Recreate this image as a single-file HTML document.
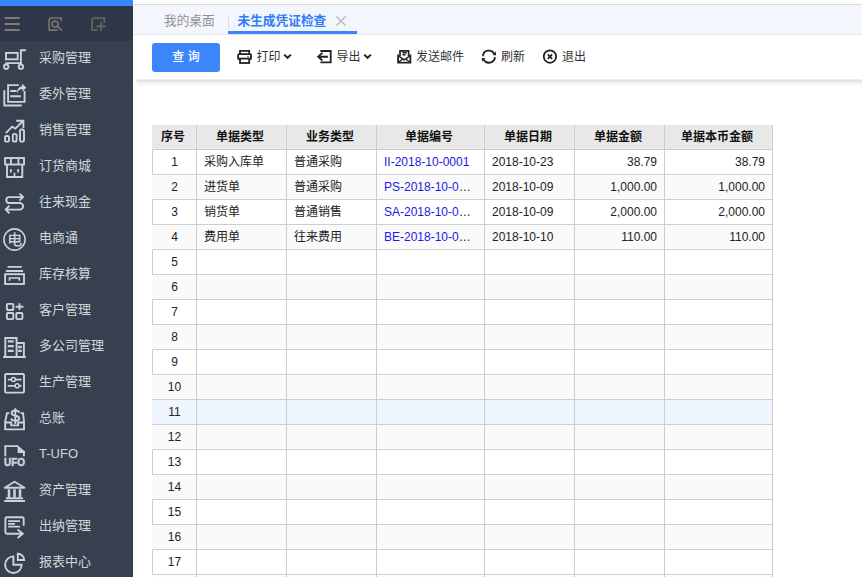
<!DOCTYPE html>
<html lang="zh-CN">
<head>
<meta charset="utf-8">
<title>未生成凭证检查</title>
<style>
*{box-sizing:border-box;margin:0;padding:0}
html,body{width:862px;height:577px;overflow:hidden;background:#fff}
body{font-family:"Liberation Sans","Noto Sans CJK SC",sans-serif;font-size:12px;color:#222;position:relative}
#side{position:absolute;left:0;top:0;width:133px;height:577px;background:#36404e}
#side .blue{position:absolute;left:0;top:0;width:133px;height:6px;background:#3686ff}
#side .hd{position:absolute;left:0;top:6px;width:133px;height:35px;background:#2e3849}
#side .hd svg{position:absolute;top:0;left:0}
#menu{position:absolute;left:0;top:40px;width:133px;list-style:none}
#menu li{height:36px;position:relative;color:#d3d6db;font-size:13px;line-height:36px;padding-left:39px;white-space:nowrap}
#menu li svg{position:absolute;left:0;top:0;width:36px;height:36px;fill:none;stroke:#cdd1d8;stroke-width:1.9}
#menu li svg .f{fill:#cdd1d8;stroke:none}
#main{position:absolute;left:133px;top:0;width:729px;height:577px;background:#fff;overflow:hidden}
#tabs{position:absolute;left:0;top:4px;width:729px;height:31px;background:#f3f6fd;border-top:1px solid #dcdbd9;border-bottom:1px solid #e4e7ee}
#tabs .t1{position:absolute;left:31px;top:0;height:29px;line-height:32px;font-size:12.700px;color:#939393}
#tabs .sep{position:absolute;left:95px;top:10px;width:1px;height:14px;background:#dcdfe6}
#tabs .t2{position:absolute;left:95px;top:0;width:129px;height:29px;line-height:32px;font-size:12.700px;font-weight:700;color:#2f7cf6;padding-left:9.500px;border-bottom:3px solid #3a85fb}
#tabs .x{position:absolute;left:202.400px;top:10.100px;width:12px;height:12px}
#bar{position:absolute;left:0;top:35px;width:729px;height:45px;background:#fff}
#shadow::before{content:"";position:absolute;left:0;top:0;width:4px;height:9px;background:linear-gradient(to right,#fff,rgba(255,255,255,0))}
#shadow{position:absolute;left:1px;top:79px;width:730px;height:9px;background:linear-gradient(to bottom,#eeeeee 0,#ececec 0.500px,#e0e0e0 1.500px,#e7e7e7 2.500px,#efefef 3.500px,#f5f5f5 4.500px,#f9f9f9 5.500px,#fcfcfc 6.500px,#fefefe 7.500px,#fff 9px)}
#bar .btn{position:absolute;left:19px;top:8px;width:68px;height:29px;border-radius:3px;background:#3b86fb;color:#fff;font-size:12px;font-weight:500;line-height:29px;text-align:center;word-spacing:0}
#bar .it{position:absolute;top:0;height:45px;line-height:44px;font-size:12px;color:#333;white-space:nowrap}
#bar svg{position:absolute}
table{position:absolute;left:19px;top:125px;border-collapse:separate;border-spacing:0;table-layout:fixed;width:621px}
th{height:25px;background:#e8e8e8;font-weight:bold;font-size:12px;color:#111;border-right:1px solid #ccc;border-bottom:1px solid #ccc;text-align:center;padding:0 3px 0 0;box-shadow:inset -1px -1px 0 #ececec;line-height:24px;vertical-align:top}
th:first-child{border-left:1px solid #e8e8e8}
td{height:25px;background:#fff;border-right:1px solid #ccc;border-bottom:1px solid #ccc;font-size:12px;color:#222;padding:0 7px;white-space:nowrap;overflow:hidden;text-overflow:ellipsis;line-height:24px;vertical-align:top}
td:first-child{border-left:1px solid #ccc}
td.n{text-align:center;padding:0}
td.r{text-align:right}
tr.e td{background:#fafafa;box-shadow:inset 0 1px 0 #fff,inset 0 -1px 0 #fff}
tr.e td:first-child{border-left-color:#fafafa}
tr.h td{background:#eef5ff}
tr.h td:first-child{border-left-color:#eef5ff}
td a{color:#1a1ae0;text-decoration:none}
</style>
</head>
<body>
<div id="side">
  <div class="blue"></div>
  <div class="hd">
    <svg width="133" height="35" viewBox="0 0 133 35" fill="none" stroke="#807b77" stroke-width="1.8">
      <path d="M4.600 12h15.200M4.600 18h15.200M4.600 24h15.200"/>
      <g stroke="#787470" stroke-width="1.700"><path d="M49.200 24.200V13.300L50.500 12H61.200V15.200M48.400 24.200H57.600"/><circle cx="55.100" cy="18.050" r="3"/><path d="M57.400 20.400L62 24.600"/></g>
      <g stroke="#686562" stroke-width="1.700"><path d="M92.050 25V13.300L93.300 12H104.300V17M91.200 24.200H97.500M96.200 20.400H105.800M101 15.700V25.100"/></g>
    </svg>
  </div>
  <ul id="menu">
    <li><svg viewBox="0 0 36 36"><rect x="6" y="12.900" width="11.700" height="6.400"/><path d="M25.900 10.300H20.900V23.100H5.300"/><circle cx="6.200" cy="26.700" r="2.200"/><circle cx="20.900" cy="26.700" r="2.200"/></svg>采购管理</li>
    <li><svg viewBox="0 0 36 36"><path d="M4.300 14.300V29.500H21.800M18.700 9.100H8.100V25.900H24.600V15M10.300 15H16.500M10.300 20.300H20.900"/><path class="f" d="M16.800 17.200C17 13 19.300 10.600 22 10.300L21.800 7.600L26.300 11.600L22.600 15.800L22.400 13.100C20.200 13.200 18.400 14.400 16.800 17.200Z"/></svg>委外管理</li>
    <li><svg viewBox="0 0 36 36"><rect x="5" y="24" width="4" height="5.600" rx="1.600"/><rect x="12.800" y="21.900" width="3.800" height="7.700" rx="1.600"/><rect x="20" y="17.500" width="4" height="12.100" rx="1.600"/><path d="M5.800 21.200L12.200 14.700L15.300 16.600L22.800 9.300M16.200 8.800H23.400V15.900"/></svg>销售管理</li>
    <li><svg viewBox="0 0 36 36"><rect x="5.100" y="10" width="18.900" height="6.500"/><path d="M10.900 10V16.500M18.400 10V16.500M7 16.500V29H22.300V16.500"/><path d="M10.900 20.900V24.600M18.100 20.900V24.600M14.500 24.800V28" stroke-width="1.700"/></svg>订货商城</li>
    <li><svg viewBox="0 0 36 36"><path d="M19.500 9.600L23.100 13.100L19.500 16.700M22.800 13.100H9.200A2.950 2.950 0 0 0 9.200 19H19.800A3.300 3.300 0 0 1 19.800 25.600H6M9.500 21.700L5.700 25.600L9.500 29.400"/></svg>往来现金</li>
    <li><svg viewBox="0 0 36 36"><circle cx="14.500" cy="19.500" r="10.600" stroke-width="1.600"/><text class="f" x="14.650" y="25" font-size="15" text-anchor="middle" font-weight="500" font-family="'Liberation Sans','Noto Sans CJK SC',sans-serif">电</text></svg>电商通</li>
    <li><svg viewBox="0 0 36 36"><path d="M7.500 10.900H21.800M5.900 15H23.100"/><rect x="5.100" y="18.200" width="18.900" height="9.800"/><path d="M9.500 24.800V22H19.300V24.800" stroke-width="1.700"/></svg>库存核算</li>
    <li><svg viewBox="0 0 36 36"><rect x="6.900" y="11.900" width="6.400" height="6.100" rx="0.800"/><rect x="6.900" y="21" width="6.400" height="6.100" rx="0.800"/><rect x="16.300" y="21" width="6.100" height="6.100" rx="0.800"/><path d="M15.600 14.700H23.400M19.500 11.200V18.100"/></svg>客户管理</li>
    <li><svg viewBox="0 0 36 36"><path d="M3.100 29H25.900M5.300 29V10H16.600V29M16.600 15H23.900V29"/><path d="M7.800 13.400H13.700M7.800 18.100H13.700M7.800 22.800H13.700M18.100 19H21.800M18.100 22.800H21.800" stroke-width="2.300"/></svg>多公司管理</li>
    <li><svg viewBox="0 0 36 36"><rect x="5.100" y="10" width="18.900" height="18.600" rx="1"/><path d="M7.800 15.600H21.500M7.800 21.800H21.500" stroke-width="1.700"/><circle cx="13.400" cy="15.500" r="2" fill="#36404e" stroke-width="1.600"/><circle cx="17.200" cy="21.800" r="2" fill="#36404e" stroke-width="1.600"/></svg>生产管理</li>
    <li><svg viewBox="0 0 36 36"><path d="M9.200 13.100H7L5.200 21.500V29.400H24V21.500L23 13.100H20.600M5.200 22.500H11.200V25.400H18.100V22.500H24"/><path d="M19.300 12.700C18.500 9.800 11.600 9.600 11.600 13.200C11.600 16.600 19.300 14.900 19.300 18.300C19.300 21.700 12 21.500 11 18.500M15.300 8.200V24" stroke-width="1.900"/></svg>总账</li>
    <li><svg viewBox="0 0 36 36"><path d="M5.300 20.300V10.100H18M23.900 15V20.300"/><path class="f" d="M17.600 9.200L25 15.400V17H17.600Z"/><text class="f" style="stroke:#cdd1d8;stroke-width:.5" x="14.550" y="29.500" font-size="10" text-anchor="middle" font-weight="bold" textLength="21" lengthAdjust="spacingAndGlyphs" font-family="'Liberation Sans',sans-serif">UFO</text></svg>T-UFO</li>
    <li><svg viewBox="0 0 36 36"><path d="M4.700 15.700L14.500 9.700L24.500 15.700ZM5.900 26.200H23.100M4.100 29H25" stroke-linejoin="round"/><path d="M9 17.200V25.600M14.500 17.200V25.600M20 17.200V25.600" stroke-width="2.600"/></svg>资产管理</li>
    <li><svg viewBox="0 0 36 36"><path d="M23.700 17.800V10.700Q23.700 9.200 22.200 9.200H6.900Q5.400 9.200 5.400 10.700V24.200Q5.400 25.700 6.900 25.700H22.600M17.600 21.500L22.800 25.700L17.600 30.100"/><path d="M8.100 13.100H20M8.100 15.900H15M8.100 18.700H20" stroke-width="1.700"/></svg>出纳管理</li>
    <li><svg viewBox="0 0 36 36"><path d="M13.400 12.400A8.300 8.300 0 1 0 21.700 20.700H13.400ZM17.800 9.800V16H24.200A6.300 6.300 0 0 0 17.800 9.800Z"/></svg>报表中心</li>
  </ul>
</div>
<div id="main">
  <div id="tabs">
    <div class="t1">我的桌面</div>
    <div class="sep"></div>
    <div class="t2">未生成凭证检查</div>
    <svg class="x" viewBox="0 0 12 12" stroke="#b9b9b9" stroke-width="1.400" fill="none"><path d="M1.500 1.500l9 9M10.500 1.500l-9 9"/></svg>
  </div>
  <div id="bar">
    <div class="btn">查 询</div>
    <svg style="left:104px;top:14px" width="16" height="16" viewBox="0 0 16 16" fill="none" stroke="#222" stroke-width="1.800"><path d="M3 5V1.800H12.200V5"/><rect x="1.100" y="5.200" width="12.900" height="5" rx="1"/><rect x="3" y="9.600" width="9.200" height="4.400" fill="#fff"/><circle cx="11" cy="7.500" r="0.700" fill="#222" stroke="none"/></svg>
    <div class="it" style="left:123.500px">打印</div>
    <svg style="left:150px;top:18px" width="10" height="8" viewBox="0 0 10 8" fill="none" stroke="#222" stroke-width="2"><path d="M1.300 1.600l3.300 3.300 3.300-3.300"/></svg>
    <svg style="left:184px;top:14px" width="16" height="16" viewBox="0 0 16 16" fill="none" stroke="#222" stroke-width="1.800"><path d="M3.400 2H13.700V13.300H3.400M1.300 7.750H10.900M5.400 3.900L1 7.750L5.400 11.500"/></svg>
    <div class="it" style="left:203.500px">导出</div>
    <svg style="left:230px;top:18px" width="10" height="8" viewBox="0 0 10 8" fill="none" stroke="#222" stroke-width="2"><path d="M1.300 1.600l3.300 3.300 3.300-3.300"/></svg>
    <svg style="left:264px;top:14px" width="16" height="16" viewBox="0 0 16 16" fill="none" stroke="#222" stroke-width="1.800"><path d="M3 7V1.800H11.600V7" stroke-width="1.700"/><path d="M1.100 5.600V13.600H13.400V5.600"/><path d="M1.500 6.900L7.200 10.900L13 6.900M1.600 13.200L5.400 10.200M12.900 13.200L9.100 10.200" stroke-width="1.400"/><path d="M5.400 3.700H9.800M5.400 5.700H8.600" stroke-width="1.400"/></svg>
    <div class="it" style="left:283px">发送邮件</div>
    <svg style="left:348px;top:14px" width="16" height="16" viewBox="0 0 16 16" fill="none" stroke="#222" stroke-width="1.800"><path d="M1.900 7.200A6.100 6.100 0 0 1 13.300 4.700M14 8.200A6.100 6.100 0 0 1 2.600 10.600"/><path d="M15 2.600V6.300H11.500ZM0.900 12.800V9H4.400Z" fill="#222" stroke="none"/></svg>
    <div class="it" style="left:368px">刷新</div>
    <svg style="left:409px;top:14px" width="16" height="16" viewBox="0 0 16 16" fill="none" stroke="#222" stroke-width="1.800"><circle cx="7.950" cy="7.600" r="6.200"/><path d="M5.800 5.400L10.100 9.800M10.100 5.400L5.800 9.800" stroke-width="1.700"/></svg>
    <div class="it" style="left:429px">退出</div>
  </div>
  <div id="shadow"></div>
  <table>
    <colgroup><col style="width:45px"><col style="width:90px"><col style="width:90px"><col style="width:108px"><col style="width:90px"><col style="width:90px"><col style="width:108px"></colgroup>
    <tr><th>序号</th><th>单据类型</th><th>业务类型</th><th>单据编号</th><th>单据日期</th><th>单据金额</th><th>单据本币金额</th></tr>
    <tr><td class="n">1</td><td>采购入库单</td><td>普通采购</td><td><a>II-2018-10-0001</a></td><td>2018-10-23</td><td class="r">38.79</td><td class="r">38.79</td></tr>
    <tr class="e"><td class="n">2</td><td>进货单</td><td>普通采购</td><td><a>PS-2018-10-0001</a></td><td>2018-10-09</td><td class="r">1,000.00</td><td class="r">1,000.00</td></tr>
    <tr><td class="n">3</td><td>销货单</td><td>普通销售</td><td><a>SA-2018-10-0001</a></td><td>2018-10-09</td><td class="r">2,000.00</td><td class="r">2,000.00</td></tr>
    <tr class="e"><td class="n">4</td><td>费用单</td><td>往来费用</td><td><a>BE-2018-10-0001</a></td><td>2018-10-10</td><td class="r">110.00</td><td class="r">110.00</td></tr>
    <tr><td class="n">5</td><td></td><td></td><td></td><td></td><td></td><td></td></tr>
    <tr class="e"><td class="n">6</td><td></td><td></td><td></td><td></td><td></td><td></td></tr>
    <tr><td class="n">7</td><td></td><td></td><td></td><td></td><td></td><td></td></tr>
    <tr class="e"><td class="n">8</td><td></td><td></td><td></td><td></td><td></td><td></td></tr>
    <tr><td class="n">9</td><td></td><td></td><td></td><td></td><td></td><td></td></tr>
    <tr class="e"><td class="n">10</td><td></td><td></td><td></td><td></td><td></td><td></td></tr>
    <tr class="h"><td class="n">11</td><td></td><td></td><td></td><td></td><td></td><td></td></tr>
    <tr class="e"><td class="n">12</td><td></td><td></td><td></td><td></td><td></td><td></td></tr>
    <tr><td class="n">13</td><td></td><td></td><td></td><td></td><td></td><td></td></tr>
    <tr class="e"><td class="n">14</td><td></td><td></td><td></td><td></td><td></td><td></td></tr>
    <tr><td class="n">15</td><td></td><td></td><td></td><td></td><td></td><td></td></tr>
    <tr class="e"><td class="n">16</td><td></td><td></td><td></td><td></td><td></td><td></td></tr>
    <tr><td class="n">17</td><td></td><td></td><td></td><td></td><td></td><td></td></tr>
    <tr class="e"><td class="n">18</td><td></td><td></td><td></td><td></td><td></td><td></td></tr>
  </table>
</div>
</body>
</html>
